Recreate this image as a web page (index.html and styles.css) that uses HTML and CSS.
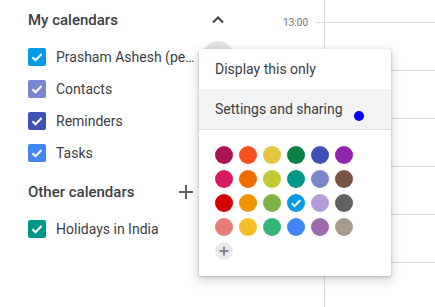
FILE: index.html
```html
<!DOCTYPE html>
<html lang="en">
  <head>
    <meta charset="UTF-8" />
    <title>Calendar</title>
    <link rel="stylesheet" href="styles.css">
  </head>
  <body>
    <div class="app">
      <!-- Sidebar -->
      <aside class="sidebar">
        <section class="group">
          <div class="group-head">
            <span class="group-title">My calendars</span>
            <span class="icon-btn">
              <svg width="24" height="24" viewBox="0 0 24 24"><path d="M7 14.5l5-5 5 5" fill="none" stroke="#3c4043" stroke-width="2"/></svg>
            </span>
          </div>
          <ul class="cal-list">
            <li class="cal-item">
              <span class="check peacock"><svg width="18" height="18" viewBox="0 0 18 18"><path d="M4.5 9.2l3 3 6-6.2" fill="none" stroke="#fff" stroke-width="2"/></svg></span>
              <span class="cal-name">Prasham Ashesh (pe…</span>
              <span class="more-btn active"></span>
            </li>
            <li class="cal-item">
              <span class="check lavender"><svg width="18" height="18" viewBox="0 0 18 18"><path d="M4.5 9.2l3 3 6-6.2" fill="none" stroke="#fff" stroke-width="2"/></svg></span>
              <span class="cal-name">Contacts</span>
              <span class="more-btn"></span>
            </li>
            <li class="cal-item">
              <span class="check blueberry"><svg width="18" height="18" viewBox="0 0 18 18"><path d="M4.5 9.2l3 3 6-6.2" fill="none" stroke="#fff" stroke-width="2"/></svg></span>
              <span class="cal-name">Reminders</span>
              <span class="more-btn"></span>
            </li>
            <li class="cal-item">
              <span class="check cobalt"><svg width="18" height="18" viewBox="0 0 18 18"><path d="M4.5 9.2l3 3 6-6.2" fill="none" stroke="#fff" stroke-width="2"/></svg></span>
              <span class="cal-name">Tasks</span>
              <span class="more-btn"></span>
            </li>
          </ul>
        </section>

        <section class="group other">
          <div class="group-head">
            <span class="group-title">Other calendars</span>
            <span class="icon-btn">
              <svg width="24" height="24" viewBox="0 0 24 24"><path d="M12 5v14M5 12h14" fill="none" stroke="#5f6368" stroke-width="2"/></svg>
            </span>
            <span class="icon-btn">
              <svg width="24" height="24" viewBox="0 0 24 24"><path d="M7 14.5l5-5 5 5" fill="none" stroke="#3c4043" stroke-width="2"/></svg>
            </span>
          </div>
          <ul class="cal-list">
            <li class="cal-item">
              <span class="check eucalyptus"><svg width="18" height="18" viewBox="0 0 18 18"><path d="M4.5 9.2l3 3 6-6.2" fill="none" stroke="#fff" stroke-width="2"/></svg></span>
              <span class="cal-name">Holidays in India</span>
              <span class="more-btn"></span>
            </li>
          </ul>
        </section>
      </aside>

      <!-- Week grid -->
      <main class="week">
        <div class="times">
          <div class="time-row">
            <span class="time-label">13:00</span>
            <span class="tick"></span>
          </div>
        </div>
        <div class="day">
          <div class="slot"></div>
          <div class="slot"></div>
          <div class="slot"></div>
          <div class="slot"></div>
          <div class="slot"></div>
          <div class="slot"></div>
        </div>
      </main>
    </div>

    <!-- Calendar options menu -->
    <div class="menu">
      <div class="menu-item">Display this only</div>
      <div class="menu-item hover">Settings and sharing</div>
      <div class="swatches">
        <span class="swatch" style="background:#ad1457"></span>
        <span class="swatch" style="background:#f4511e"></span>
        <span class="swatch" style="background:#e4c441"></span>
        <span class="swatch" style="background:#0b8043"></span>
        <span class="swatch" style="background:#3f51b5"></span>
        <span class="swatch" style="background:#8e24aa"></span>
        <span class="swatch" style="background:#d81b60"></span>
        <span class="swatch" style="background:#ef6c00"></span>
        <span class="swatch" style="background:#c0ca33"></span>
        <span class="swatch" style="background:#009688"></span>
        <span class="swatch" style="background:#7986cb"></span>
        <span class="swatch" style="background:#795548"></span>
        <span class="swatch" style="background:#d50000"></span>
        <span class="swatch" style="background:#f09300"></span>
        <span class="swatch" style="background:#7cb342"></span>
        <span class="swatch" style="background:#039be5"><svg width="18" height="18" viewBox="0 0 18 18"><path d="M4.8 9.3l2.8 2.8 5.6-5.8" fill="none" stroke="#fff" stroke-width="2"/></svg></span>
        <span class="swatch" style="background:#b39ddb"></span>
        <span class="swatch" style="background:#616161"></span>
        <span class="swatch" style="background:#e67c73"></span>
        <span class="swatch" style="background:#f6bf26"></span>
        <span class="swatch" style="background:#33b679"></span>
        <span class="swatch" style="background:#4285f4"></span>
        <span class="swatch" style="background:#9e69af"></span>
        <span class="swatch" style="background:#a79b8e"></span>
        <span class="swatch add"><svg width="18" height="18" viewBox="0 0 18 18"><path d="M9 4.5v9M4.5 9h9" fill="none" stroke="#80868b" stroke-width="2"/></svg></span>
      </div>
    </div>

    <span class="pointer"></span>
  </body>
</html>
```

FILE: styles.css
```css
body {
  margin: 0;
  font-family: Roboto, "Noto Sans", Arial, sans-serif;
  color: #3c4043;
  background: #fff;
  width: 435px;
  height: 307px;
  overflow: hidden;
}

.app {
  display: flex;
  height: 307px;
}

/* Sidebar */
.sidebar {
  width: 240px;
  flex-shrink: 0;
  padding: 0 6px 0 28px;
  box-sizing: border-box;
}

.group-head {
  display: flex;
  align-items: center;
  height: 40px;
}

.group-title {
  flex: 1;
  font-size: 15px;
  font-weight: 500;
}

.icon-btn {
  width: 32px;
  height: 32px;
  display: flex;
  align-items: center;
  justify-content: center;
}

.cal-list {
  list-style: none;
  margin: 1px 0 0;
  padding: 0;
}

.other {
  margin-top: 3px;
}

.cal-item {
  display: flex;
  align-items: center;
  height: 32px;
}

.check {
  width: 18px;
  height: 18px;
  border-radius: 2px;
  flex-shrink: 0;
  display: flex;
}

.peacock { background: #039be5; }
.lavender { background: #7986cb; }
.blueberry { background: #3f51b5; }
.cobalt { background: #4285f4; }
.eucalyptus { background: #009688; }

.cal-name {
  flex: 1;
  min-width: 0;
  margin: 0 4px 0 10px;
  font-size: 14px;
  white-space: nowrap;
}

.more-btn {
  width: 32px;
  height: 32px;
  border-radius: 50%;
  flex-shrink: 0;
}

.more-btn.active {
  background: #e2e3e4;
}

/* Week grid */
.week {
  flex: 1;
  display: flex;
}

.times {
  width: 84px;
}

.time-row {
  display: flex;
  align-items: center;
  height: 45px;
}

.time-label {
  flex: 1;
  text-align: right;
  padding-right: 8px;
  font-size: 10px;
  color: #70757a;
}

.tick {
  width: 8px;
  height: 1px;
  background: #dadce0;
}

.day {
  flex: 1;
  border-left: 1px solid #dadce0;
  padding-top: 22px;
}

.slot {
  height: 48px;
  box-sizing: border-box;
  border-top: 1px solid #dadce0;
}

/* Menu */
.menu {
  position: absolute;
  left: 199px;
  top: 49px;
  width: 192px;
  background: #fff;
  border-radius: 2px;
  box-shadow: 0 1px 3px 0 rgba(60, 64, 67, 0.3), 0 4px 8px 3px rgba(60, 64, 67, 0.15);
}

.menu-item {
  height: 40px;
  line-height: 40px;
  padding-left: 16px;
  font-size: 14px;
}

.menu-item.hover {
  background: #f1f3f4;
  border-bottom: 1px solid #e0e2e4;
}

.swatches {
  display: grid;
  grid-template-columns: repeat(6, 18px);
  gap: 6px;
  padding: 16px;
}

.swatch {
  width: 18px;
  height: 18px;
  border-radius: 50%;
  display: flex;
}

.swatch.add {
  background: #e8eaed;
}

.pointer {
  position: absolute;
  left: 354px;
  top: 111px;
  width: 10px;
  height: 10px;
  border-radius: 50%;
  background: #0000ff;
}
```
